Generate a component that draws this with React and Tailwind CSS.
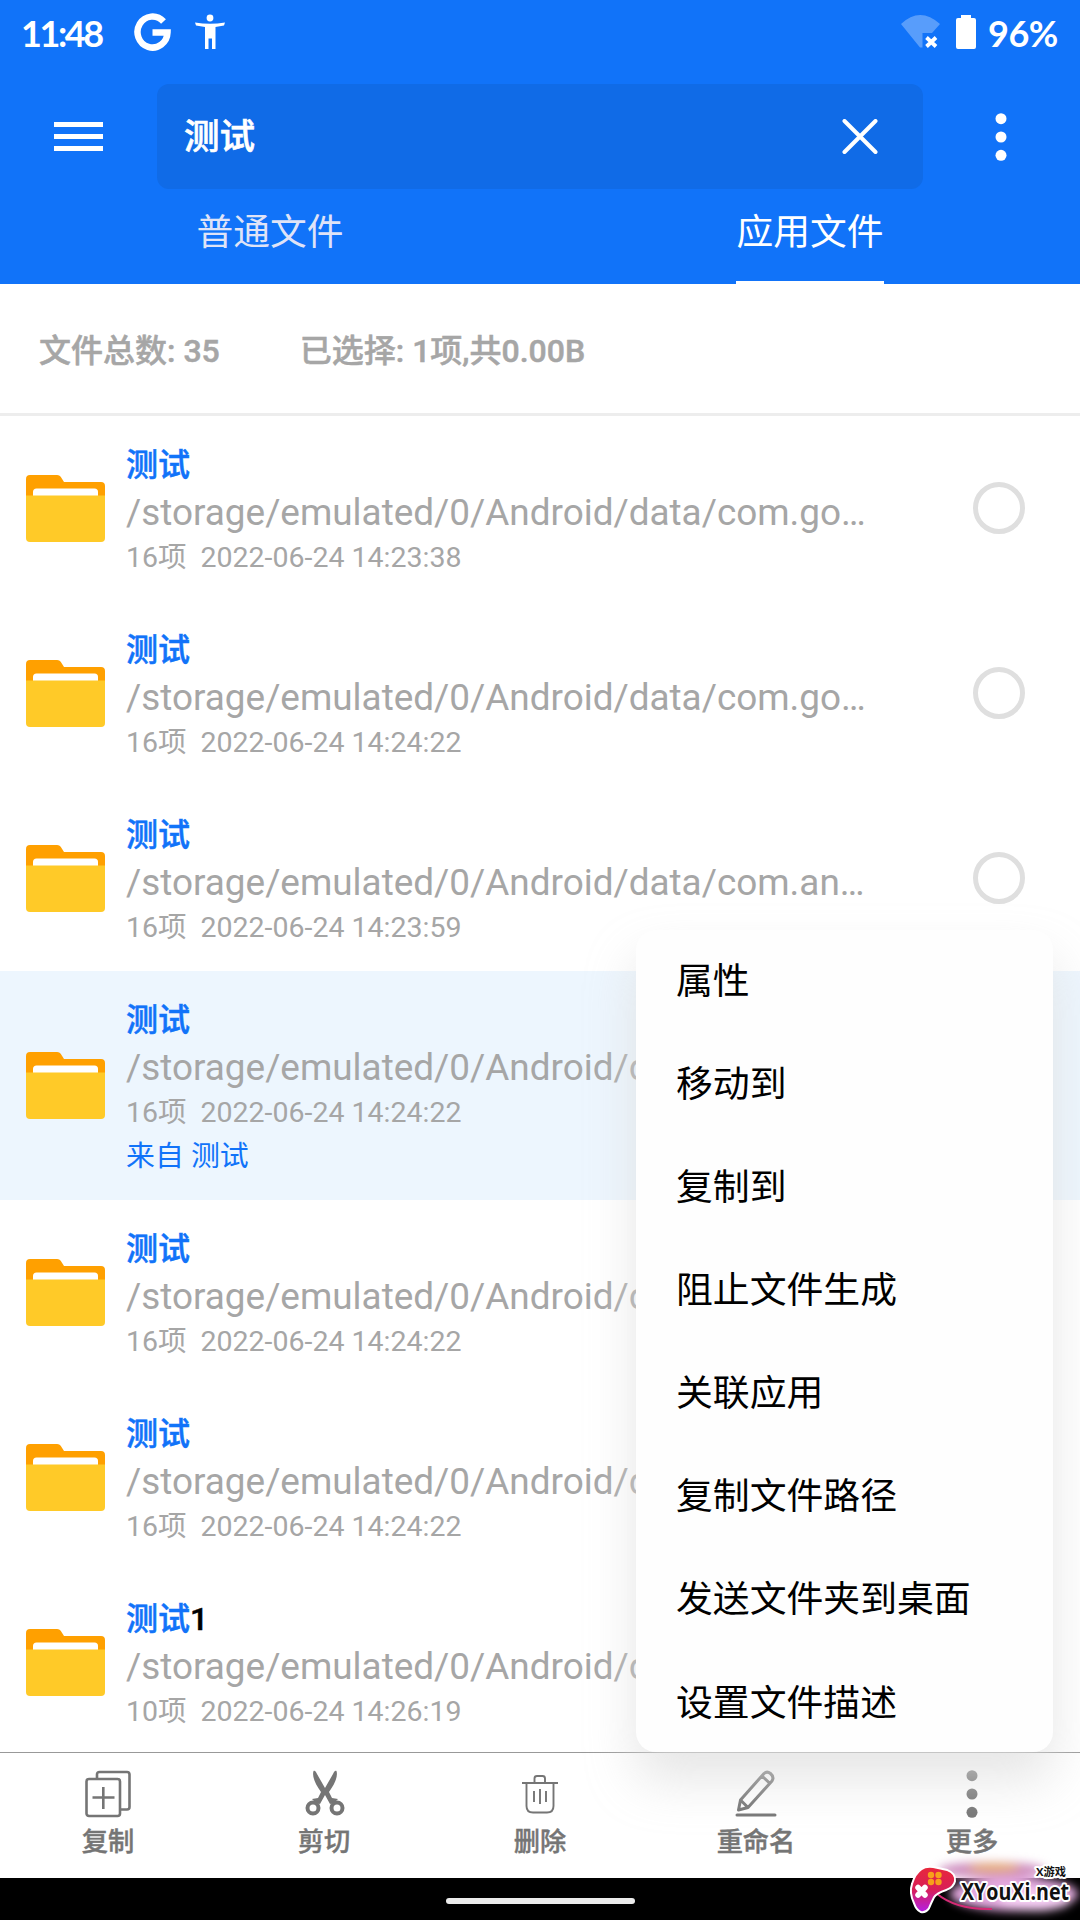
const files = [
    { id: 1, info: "16项", date: "2022-06-24 14:23:38", pkg: "com.go…" },
    { id: 2, info: "16项", date: "2022-06-24 14:24:22", pkg: "com.go…" },
    { id: 3, info: "16项", date: "2022-06-24 14:23:59", pkg: "com.an…" },
    { id: 4, info: "16项", date: "2022-06-24 14:24:22", pkg: "com.go…", from: "测试", selected: true },
    { id: 5, info: "16项", date: "2022-06-24 14:24:22", pkg: "com.go…" },
    { id: 6, info: "16项", date: "2022-06-24 14:24:22", pkg: "com.go…" },
    { id: 7, info: "10项", date: "2022-06-24 14:26:19", pkg: "com.go…", suffix: "1" },
];

const menuItems = [
    "属性",
    "移动到",
    "复制到",
    "阻止文件生成",
    "关联应用",
    "复制文件路径",
    "发送文件夹到桌面",
    "设置文件描述",
];

function FolderIcon() {
    return (
        <svg width="79" height="67" viewBox="0 0 79 67" className="block shrink-0">
            <path d="M4 0H31Q34 0 35.500 3L38 7H75Q79 7 79 11V30H0V4Q0 0 4 0Z" fill="#ffa000" />
            <path d="M7 24V17Q7 13.500 10.500 13.500H68.500Q72 13.500 72 17V24Z" fill="#fff" />
            <path d="M0 20.500H79V63Q79 67 75 67H4Q0 67 0 63Z" fill="#ffca28" />
        </svg>
    );
}

function CopyIcon() {
    return (
        <svg width="46" height="48" viewBox="0 0 46 48" fill="none" stroke="#757575" strokeWidth="2.600">
            <path d="M12 8V4.500Q12 2 14.500 2H42Q44.500 2 44.500 4.500V37Q44.500 39.500 42 39.500H36" />
            <rect x="1.500" y="9" width="33.500" height="37" rx="2.500" />
            <path d="M7.500 27.500H29.500M18.300 17V39" />
        </svg>
    );
}

function CutIcon() {
    return (
        <svg width="40" height="48" viewBox="0 0 40 48" fill="#757575" className="ml-[2px]">
            <path d="M8.500 1C10 0 11 2 12 4L20 18L28 4C29 2 30 0 31.500 1C33 6 30.500 13 24 22L27 28L33 29L29 33L25 34L20 25L15 34L11 33L7 29L13 28L16 22C9.500 13 7 6 8.500 1Z" />
            <circle cx="8" cy="38" r="5.500" fill="#fff" stroke="#757575" strokeWidth="4" />
            <circle cx="32" cy="38" r="5.500" fill="#fff" stroke="#757575" strokeWidth="4" />
        </svg>
    );
}

function DeleteIcon() {
    return (
        <svg width="38" height="48" viewBox="0 0 38 48" fill="none" stroke="#757575" strokeWidth="1.900">
            <path d="M1 13H37M13.500 13V8.500Q13.500 6 16 6H21.500Q24 6 24 8.500V13" />
            <path d="M5.500 13V36Q5.500 42.500 12 42.500H26Q32.500 42.500 32.500 36V13" />
            <path d="M13 21V32M19 19V34M25 21V32" />
        </svg>
    );
}

function RenameIcon() {
    return (
        <svg width="42" height="48" viewBox="0 0 42 48" fill="none" stroke="#757575" strokeWidth="3" strokeLinejoin="round">
            <path d="M3.500 40L5.500 30L29 3.500Q32 .800 35.500 3.500Q39.500 7 37 11L13 37.500ZM27 6L35 13.500M6 30.500L13 37.500" />
            <path d="M2 45H40" strokeLinecap="round" />
        </svg>
    );
}

function Dots({ className }) {
    return (
        <svg width="12" height="48" viewBox="0 0 12 48" fill="currentColor" className={className}>
            <circle cx="6" cy="5.700" r="5.500" />
            <circle cx="6" cy="24" r="5.500" />
            <circle cx="6" cy="42.300" r="5.500" />
        </svg>
    );
}

function StatusBar() {
    return (
        <div className="flex h-[64px] items-center pr-[22px] pl-[21px] font-[Lato,sans-serif] text-[36px] font-bold">
            <span className="w-[113px] pt-[1px] tracking-[-2.400px]">11:48</span>
            <svg width="37" height="38" viewBox="0 0 37 38" fill="none" stroke="#fff" strokeWidth="6.500">
                <path d="M29.500 8.500A15 15.500 0 1 0 33.500 19.500H18.500" />
            </svg>
            <svg width="30" height="36" viewBox="0 0 30 36" fill="#fff" className="ml-[24px]">
                <circle cx="15" cy="4" r="3.400" />
                <path d="M0 8.500L1 11.500L10 13V35H13.500V24.500H17V35H20.500V13L29 11.500L30 8.500Q15 11 0 8.500Z" />
            </svg>
            <div className="ml-auto flex items-center">
                <svg width="39" height="36" viewBox="0 0 39 36">
                    <path d="M0 10Q19 -8 39 10L31 19H21.500V33.500H19Z" fill="#fff" opacity=".3" />
                    <path d="M25.500 23.500L35 32.500M35 23.500L25.500 32.500" stroke="#fff" strokeWidth="3.800" />
                </svg>
                <svg width="20" height="36" viewBox="0 0 20 36" fill="#fff" className="ml-[16px]">
                    <path d="M5 1H15V4H18Q20 4 20 6V33Q20 35 18 35H2Q0 35 0 33V6Q0 4 2 4H5Z" />
                </svg>
                <span className="ml-[12px] w-[70px] pt-[1px] tracking-[-0.500px]">96%</span>
            </div>
        </div>
    );
}

function Header() {
    return (
        <header className="h-[284px] shrink-0 bg-[#1173f9] text-white">
            <StatusBar />
            <div className="flex items-center pt-[20px]">
                <div className="ml-[54px] flex w-[49px] flex-col gap-[7px]">
                    <span className="h-[5px] bg-white" />
                    <span className="h-[5px] bg-white" />
                    <span className="h-[5px] bg-white" />
                </div>
                <div className="ml-[54px] flex h-[105px] w-[766px] items-center justify-between rounded-[12px] bg-[#106be7] pr-[45px] pl-[27px]">
                    <span className="pt-[2px] text-[35.500px] font-medium [-webkit-text-stroke:0.6px]">测试</span>
                    <svg width="36" height="36" viewBox="0 0 36 36" stroke="#fff" strokeWidth="4" strokeLinecap="round">
                        <path d="M2.500 2L33.500 33M33.500 2L2.500 33" />
                    </svg>
                </div>
                <Dots className="ml-[72px]" />
            </div>
            <div className="flex h-[95px] text-[36.750px]">
                <div className="flex flex-1 justify-center pt-[16px] text-[#dfe3f7]">普通文件</div>
                <div className="flex flex-1 justify-center">
                    <span className="border-b-[3px] border-white pt-[16px]">应用文件</span>
                </div>
            </div>
        </header>
    );
}

function FileRow({ file }) {
    return (
        <li
            className={
                file.selected
                    ? "flex h-[229px] shrink-0 items-center bg-[#edf6fe] pr-[55px] pl-[26px]"
                    : "flex h-[185px] shrink-0 items-center pr-[55px] pl-[26px]"
            }
        >
            <FolderIcon />
            <div className="ml-[21px] flex-1 pt-[3px] text-[#a6a6a6]">
                <div className="h-[49px] text-[32px] leading-[48px] font-medium text-[#1173f9] [-webkit-text-stroke:0.5px]">
                    测试
                    {file.suffix && <span className="text-black">{file.suffix}</span>}
                </div>
                <div className="h-[46px] text-[36.900px] leading-[46px] whitespace-nowrap">
                    /storage/emulated/0/Android/data/{file.pkg}
                </div>
                <div className="flex h-[43px] gap-[14px] text-[28.500px] leading-[43px] whitespace-nowrap">
                    <span>{file.info}</span>
                    <span>{file.date}</span>
                </div>
                {file.from && (
                    <div className="h-[44px] text-[28.900px] leading-[44px] text-[#1173f9]">来自 {file.from}</div>
                )}
            </div>
            <span className="mb-[1px] size-[52px] rounded-full border-[5px] border-[#dfdfdf]" />
        </li>
    );
}

function PopupMenu() {
    return (
        <div className="absolute top-[930px] left-[636px] h-[822px] w-[417px] rounded-[20px] bg-[#fefefe] shadow-[0_28px_50px_rgba(222,222,222,0.750)]">
            {menuItems.map((item) => (
                <div key={item} className="flex h-[103.100px] items-center pl-[40px] text-[36.850px] text-black">
                    {item}
                </div>
            ))}
        </div>
    );
}

function Action({ label, children }) {
    return (
        <button className="flex flex-1 flex-col items-center pt-[17px] text-[26.250px] leading-[38px] font-medium text-[#757575] [-webkit-text-stroke:0.4px]">
            {children}
            <span className="mt-[5px]">{label}</span>
        </button>
    );
}

function Watermark() {
    return (
        <div className="absolute right-0 bottom-0 h-[70px] w-[200px] overflow-hidden">
            <svg width="200" height="70" viewBox="0 0 200 70">
                <defs>
                    <linearGradient id="pad" x1="0" y1="0" x2="0" y2="1">
                        <stop offset="0" stopColor="#e8283c" />
                        <stop offset=".5" stopColor="#d81f57" />
                        <stop offset="1" stopColor="#b51fe0" />
                    </linearGradient>
                    <filter id="soft" x="-30%" y="-60%" width="160%" height="220%">
                        <feGaussianBlur stdDeviation="5" />
                    </filter>
                </defs>
                <g filter="url(#soft)">
                    <ellipse cx="112" cy="20" rx="54" ry="8" fill="#cf8fc0" />
                    <ellipse cx="114" cy="18" rx="26" ry="5" fill="#e8b07c" />
                    <ellipse cx="134" cy="44" rx="64" ry="17" fill="#e3a8df" />
                    <ellipse cx="155" cy="50" rx="36" ry="11" fill="#f6cdf4" />
                </g>
                <path d="M56 43Q76 60 112 59" fill="none" stroke="#d42b75" strokeWidth="2" />
                <path
                    d="M33 34Q36 24 42 20Q46 17 53 18L67 21Q75 24 74 31Q73 36 66 39Q56 42 53 47Q50 53 48 58Q45 62 41 61Q37 59 35 53Q30 43 33 34Z"
                    fill="url(#pad)"
                    stroke="#fff"
                    strokeWidth="4"
                    paintOrder="stroke"
                />
                <path d="M38 37.500L45 45M45 37.500L38 45" stroke="#fff" strokeWidth="5.500" strokeLinecap="round" />
                <g fill="#f7a11b">
                    <circle cx="51" cy="25" r="3.200" />
                    <circle cx="58.500" cy="25" r="3.200" />
                    <circle cx="51" cy="32" r="3.200" />
                    <circle cx="58.500" cy="32" r="3.200" />
                </g>
                <g fontWeight="700" fill="#111" stroke="#fff" strokeWidth="4" paintOrder="stroke" strokeLinejoin="round">
                    <text x="156" y="26" fontSize="11" textLength="30" lengthAdjust="spacingAndGlyphs" className="font-['Open_Sans','Noto_Sans_CJK_SC',sans-serif]">X游戏</text>
                    <text x="81" y="50" fontSize="24" textLength="108" lengthAdjust="spacingAndGlyphs" className="font-['Open_Sans',sans-serif]">XYouXi.net</text>
                </g>
            </svg>
        </div>
    );
}

export default function App() {
    return (
        <div className="relative flex h-[1920px] w-[1080px] flex-col overflow-hidden bg-white font-[Roboto,'Noto_Sans_CJK_SC',sans-serif]">
            <Header />

            {/* Totals */}
            <div className="flex h-[132px] shrink-0 items-center gap-[80px] border-b-[3px] border-[#ededed] pt-[4px] pl-[39px] text-[32px] font-medium text-[#a6a6a6] [-webkit-text-stroke:0.5px]">
                <span>文件总数: 35</span>
                <span>已选择: 1项,共0.00B</span>
            </div>

            {/* Results */}
            <ul className="flex h-[1336px] shrink-0 flex-col overflow-hidden">
                {files.map((file) => (
                    <FileRow key={file.id} file={file} />
                ))}
            </ul>

            {/* Actions */}
            <nav className="flex h-[126px] shrink-0 border-t border-[#999]">
                <Action label="复制">
                    <CopyIcon />
                </Action>
                <Action label="剪切">
                    <CutIcon />
                </Action>
                <Action label="删除">
                    <DeleteIcon />
                </Action>
                <Action label="重命名">
                    <RenameIcon />
                </Action>
                <Action label="更多">
                    <Dots />
                </Action>
            </nav>

            {/* System navigation */}
            <div className="flex h-[42px] shrink-0 items-center justify-center bg-black">
                <span className="mt-[4px] h-[6px] w-[189px] rounded-full bg-[#ebebeb]" />
            </div>

            <PopupMenu />
            <Watermark />
        </div>
    );
}
